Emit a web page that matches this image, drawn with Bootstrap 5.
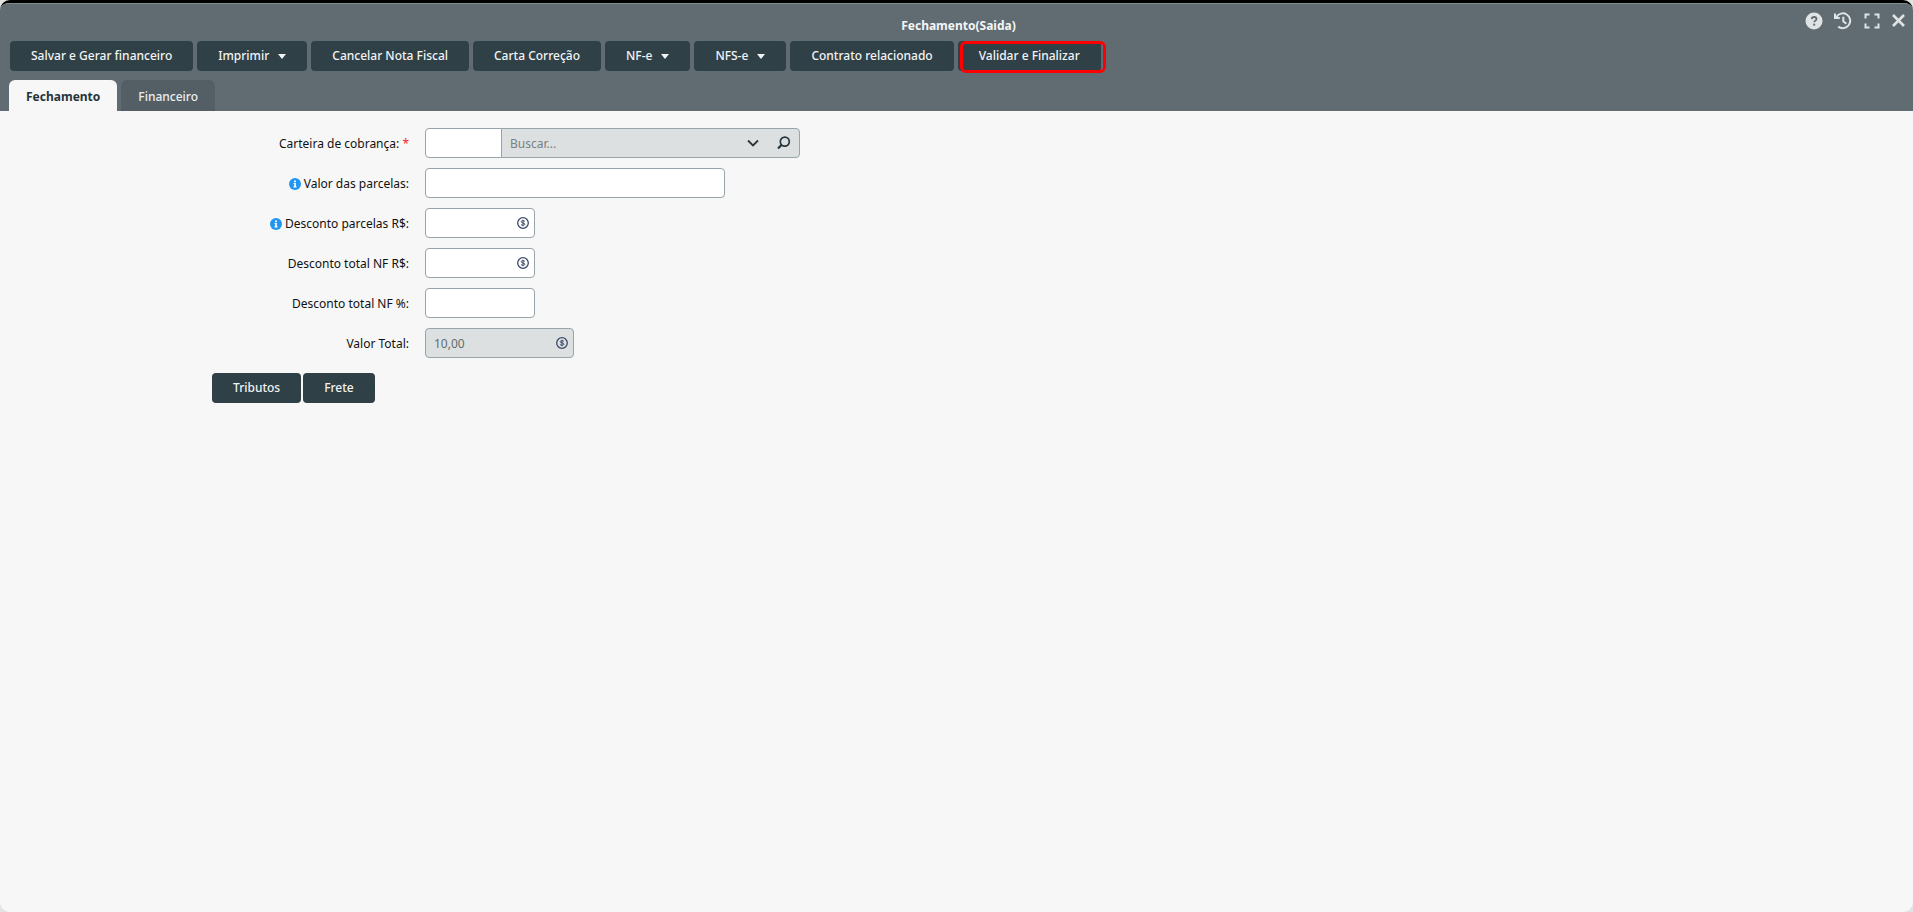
<!DOCTYPE html>
<html lang="pt-BR">
<head>
<meta charset="utf-8">
<meta name="viewport" content="width=device-width, initial-scale=1">
<title>Fechamento(Saida)</title>
<link href="https://cdn.jsdelivr.net/npm/bootstrap@5.3.0/dist/css/bootstrap.min.css" rel="stylesheet">
<style>
  body { background: #e3e3e3; font: 12px/18px "Noto Sans", sans-serif; color: #111; }
  .app-window { background: #f7f7f7; border-top: 3px solid #000; border-radius: 10px; }
  .app-header { background: #606c72; box-shadow: inset 0 1px #7f8d8e; padding: 0 8px 0 10px; }
  .title-row { height: 38px; padding: 6px 0 0 2px; }
  .app-title { font-size: 12px; line-height: 18px; font-weight: 700; color: #f4f6f6; }
  .window-tools { right: -2px; top: 9px; gap: 10px; }
  .window-tools button { color: #dfe3e4; line-height: 0; }
  .btn-app { --bs-btn-color: #f2f4f4; --bs-btn-bg: #304047; --bs-btn-hover-color: #fff; --bs-btn-hover-bg: #25343a;
    --bs-btn-active-color: #fff; --bs-btn-active-bg: #25343a; --bs-btn-border-width: 0; --bs-btn-border-radius: 4px;
    --bs-btn-padding-x: 21px; --bs-btn-padding-y: 0; --bs-btn-font-size: 12px; --bs-btn-line-height: 30px; --bs-btn-font-weight: 500;
    height: 30px; white-space: nowrap; }
  .btn-app.dropdown-toggle::after { border-top: 5px solid; border-left: 4px solid transparent; border-right: 4px solid transparent; margin-left: 9px; vertical-align: 1px; }
  .toolbar { gap: 4px; }
  .highlighted::after { content: ""; position: absolute; inset: 0 -5px -2px 2px; border: 3px solid #f00; border-radius: 6px; pointer-events: none; }
  .app-tabs { --bs-nav-tabs-border-width: 0; --bs-nav-link-padding-x: 17px; --bs-nav-link-padding-y: 0; --bs-nav-tabs-border-radius: 6px;
    --bs-nav-link-color: #eceeee; --bs-nav-link-hover-color: #fff; --bs-nav-tabs-link-active-bg: #f7f7f7; --bs-nav-tabs-link-active-color: #26343a;
    gap: 4px; margin: 9px 0 0 -1px; }
  .app-tabs .nav-link { background: #535f65; font-size: 12px; line-height: 28px; padding-top: 3px; font-weight: 500; }
  .app-tabs .nav-link.active { background: #f7f7f7; font-weight: 700; }
  .entry-form { padding: 17px 16px 16px 212px; }
  .field-line { gap: 16px; margin-bottom: 10px; }
  .field-line > label { width: 197px; padding-top: 2px; text-align: right; white-space: nowrap; }
  .info-dot { vertical-align: -2px; }
  .form-control { height: 30px; padding: 0 8px; font-size: 12px; line-height: 18px; border-color: #98a4a9; border-radius: 4px; color: #111; }
  .form-control:disabled { background: #dce0e1; color: #626b6e; border-color: #98a4a9; }
  .form-control::placeholder { color: #7b8183; }
  .lookup { width: 375px; }
  .lookup .code { flex: 0 0 77px; }
  .input-group.lookup .search { padding: 0 88px 0 8px; background: #dce0e1; border-radius: 0 4px 4px 0 !important; }
  .lookup .lookup-tools { right: 9px; top: 0; height: 30px; gap: 17px; z-index: 6; }
  .lookup .lookup-tools button { color: #29373d; line-height: 0; }
  .w-long { width: 300px; }
  .w-short { width: 110px; }
  .w-mid { width: 149px; }
  .coin { right: 6px; top: 9px; pointer-events: none; }
  .required { color: #f22; }
  .extra-actions { gap: 2px; padding-top: 5px; }
  @media (max-width: 991px) { .entry-form { padding-left: 16px; } }
</style>
</head>
<body>
<div class="app-window min-vh-100 overflow-hidden">
  <svg class="d-none" aria-hidden="true">
    <symbol id="coin" viewBox="0 0 12 12">
      <circle cx="6" cy="6" r="5.3" fill="none" stroke="#3b4968" stroke-width="1.3"/>
      <path d="M7.9 4.6C7.5 3.9 6.8 3.7 6 3.7 4.9 3.7 4.2 4.1 4.2 4.8 4.2 6.4 7.8 5.5 7.8 7.1 7.8 7.9 7.1 8.3 6 8.3 5.1 8.3 4.4 8 4 7.4M6 2.8V9.2" fill="none" stroke="#3b4968"/>
    </symbol>
    <symbol id="info" viewBox="0 0 12 12">
      <circle cx="6" cy="6" r="6" fill="#2196f3"/>
      <path d="M5.1 2.6h1.8v1.6H5.1zM4.6 5h2.3v3.3h.6v1.1h-3V8.3h.7V6.1h-.6z" fill="#fff"/>
    </symbol>
  </svg>
  <header class="app-header">
    <div class="title-row position-relative">
      <h1 class="app-title text-center m-0 pt-2">Fechamento(Saida)</h1>
      <div class="window-tools position-absolute d-flex align-items-center">
        <button type="button" class="btn p-0 border-0" aria-label="Ajuda"><svg width="18" height="18" viewBox="0 0 18 18"><circle cx="9" cy="9" r="8.5" fill="currentColor"/><path d="M6.7 7.1C6.8 5.7 7.8 5 9.1 5c1.4 0 2.4.8 2.4 2 0 1.6-2.3 1.7-2.3 3.3" fill="none" stroke="#606c72" stroke-width="1.8"/><circle cx="9.2" cy="12.7" r="1.1" fill="#606c72"/></svg></button>
        <button type="button" class="btn p-0 border-0" aria-label="Histórico"><svg width="20" height="18" viewBox="0 0 20 18" fill="none" stroke="currentColor" stroke-width="2"><path d="M3.3 5.2A7.4 7.4 0 1 1 5.2 14.6M2 1.5V6h4.8M10.3 4.8v4.5l3 2.4"/></svg></button>
        <button type="button" class="btn p-0 border-0" aria-label="Tela cheia"><svg width="18" height="18" viewBox="0 0 18 18" fill="none" stroke="currentColor" stroke-width="2"><path d="M2.5 6.5v-4h4M11.5 2.5h4v4M15.5 11.5v4h-4M6.5 15.5h-4v-4"/></svg></button>
        <button type="button" class="btn p-0 border-0" aria-label="Fechar"><svg width="16" height="18" viewBox="0 0 16 18" fill="none" stroke="currentColor" stroke-width="2.6"><path d="M2 3l11 11M13 3l-11 11"/></svg></button>
      </div>
    </div>
    <div class="toolbar d-flex flex-wrap">
      <button type="button" class="btn btn-app">Salvar e Gerar financeiro</button>
      <button type="button" class="btn btn-app dropdown-toggle">Imprimir</button>
      <button type="button" class="btn btn-app">Cancelar Nota Fiscal</button>
      <button type="button" class="btn btn-app">Carta Correção</button>
      <button type="button" class="btn btn-app dropdown-toggle">NF-e</button>
      <button type="button" class="btn btn-app dropdown-toggle">NFS-e</button>
      <button type="button" class="btn btn-app">Contrato relacionado</button>
      <button type="button" class="btn btn-app highlighted position-relative">Validar e Finalizar</button>
    </div>
    <nav class="nav nav-tabs app-tabs">
      <a class="nav-link active" aria-current="page" href="#fechamento">Fechamento</a>
      <a class="nav-link" href="#financeiro">Financeiro</a>
    </nav>
  </header>
  <main id="fechamento">
    <form class="entry-form">
      <div class="field-line d-flex align-items-center">
        <label for="carteira">Carteira de cobrança: <span class="required">*</span></label>
        <div class="input-group lookup flex-nowrap position-relative">
          <input id="carteira" class="form-control code" type="text">
          <input class="form-control search" type="text" placeholder="Buscar..." aria-label="Buscar carteira">
          <div class="lookup-tools position-absolute d-flex align-items-center">
            <button type="button" class="btn p-0 border-0" aria-label="Abrir lista"><svg width="14" height="14" viewBox="0 0 14 14" fill="none" stroke="currentColor" stroke-width="1.8"><path d="M2 4.5l5 5 5-5"/></svg></button>
            <button type="button" class="btn p-0 border-0" aria-label="Pesquisar"><svg width="14" height="14" viewBox="0 0 14 14" fill="none" stroke="currentColor"><circle cx="7.8" cy="5.6" r="4.5" stroke-width="1.7"/><path d="M4.6 8.9L1 12.5" stroke-width="2.2"/></svg></button>
          </div>
        </div>
      </div>
      <div class="field-line d-flex align-items-center">
        <label for="parcelas"><svg width="12" height="12" class="info-dot" aria-hidden="true"><use href="#info"/></svg> Valor das parcelas:</label>
        <input id="parcelas" class="form-control w-long" type="text">
      </div>
      <div class="field-line d-flex align-items-center">
        <label for="desc-parcelas"><svg width="12" height="12" class="info-dot" aria-hidden="true"><use href="#info"/></svg> Desconto parcelas R$:</label>
        <div class="position-relative w-short"><input id="desc-parcelas" class="form-control" type="text"><svg class="coin position-absolute" width="12" height="12" aria-hidden="true"><use href="#coin"/></svg></div>
      </div>
      <div class="field-line d-flex align-items-center">
        <label for="desc-nf">Desconto total NF R$:</label>
        <div class="position-relative w-short"><input id="desc-nf" class="form-control" type="text"><svg class="coin position-absolute" width="12" height="12" aria-hidden="true"><use href="#coin"/></svg></div>
      </div>
      <div class="field-line d-flex align-items-center">
        <label for="desc-pct">Desconto total NF %:</label>
        <input id="desc-pct" class="form-control w-short" type="text">
      </div>
      <div class="field-line d-flex align-items-center">
        <label for="total">Valor Total:</label>
        <div class="position-relative w-mid"><input id="total" class="form-control" type="text" value="10,00" disabled><svg class="coin position-absolute" width="12" height="12" aria-hidden="true"><use href="#coin"/></svg></div>
      </div>
      <div class="extra-actions d-flex">
        <button type="button" class="btn btn-app">Tributos</button>
        <button type="button" class="btn btn-app">Frete</button>
      </div>
    </form>
  </main>
</div>
<script src="https://cdn.jsdelivr.net/npm/bootstrap@5.3.0/dist/js/bootstrap.bundle.min.js"></script>
</body>
</html>
